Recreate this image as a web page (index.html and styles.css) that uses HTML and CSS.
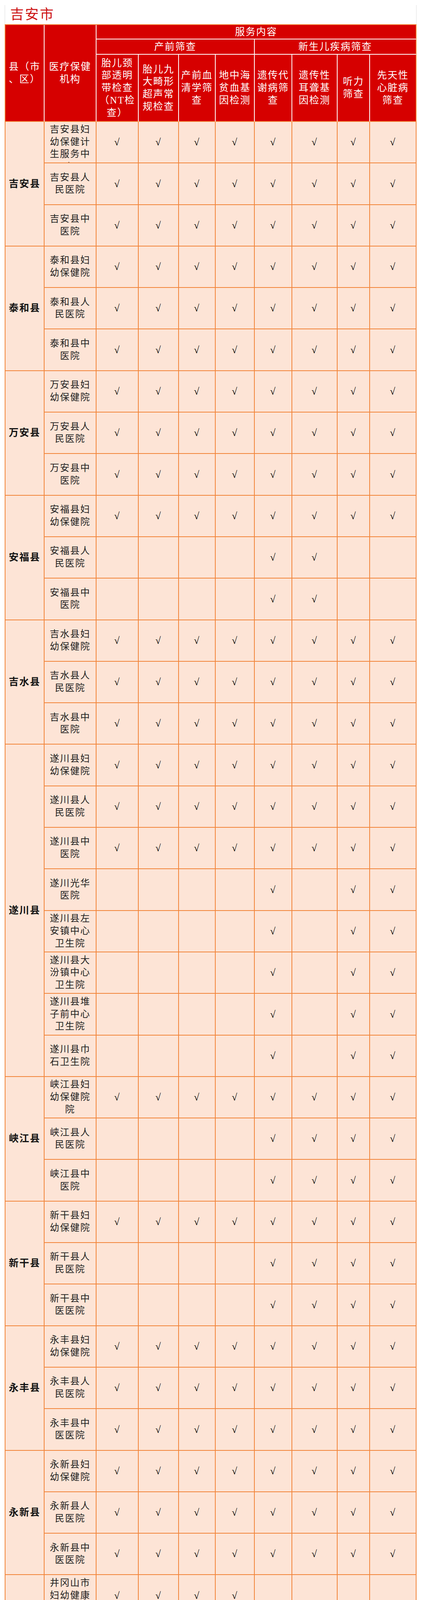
FILE: index.html
```html
<!DOCTYPE html>
<html lang="zh-CN">
<head>
<meta charset="utf-8">
<title>吉安市</title>
<link rel="stylesheet" href="styles.css">
</head>
<body>
<div class="title">吉安市</div>
<table class="tbl">
<colgroup>
<col class="w-county"><col class="w-org"><col class="w-c1"><col class="w-c2"><col class="w-c3"><col class="w-c4"><col class="w-c5"><col class="w-c6"><col class="w-c7"><col class="w-c8">
</colgroup>
<thead>
<tr class="h1"><th rowspan="3" class="eb">县（市<br>、区）</th><th rowspan="3" class="eb">医疗保健<br>机构</th><th colspan="8" class="er">服务内容</th></tr>
<tr class="h2"><th colspan="4">产前筛查</th><th colspan="4" class="er">新生儿疾病筛查</th></tr>
<tr class="h3"><th class="eb">胎儿颈<br>部透明<br>带检查<br>（NT检<br>查）</th><th class="eb">胎儿九<br>大畸形<br>超声常<br>规检查</th><th class="eb">产前血<br>清学筛<br>查</th><th class="eb">地中海<br>贫血基<br>因检测</th><th class="eb">遗传代<br>谢病筛<br>查</th><th class="eb">遗传性<br>耳聋基<br>因检测</th><th class="eb">听力<br>筛查</th><th class="eb er">先天性<br>心脏病<br>筛查</th></tr>
</thead>
<tbody>
<tr><td class="county" rowspan="3">吉安县</td><td class="org clip"><div class="clipbox">吉安县妇幼保健计生服务中心</div></td><td>√</td><td>√</td><td>√</td><td>√</td><td>√</td><td>√</td><td>√</td><td>√</td></tr>
<tr><td class="org">吉安县人民医院</td><td>√</td><td>√</td><td>√</td><td>√</td><td>√</td><td>√</td><td>√</td><td>√</td></tr>
<tr><td class="org">吉安县中医院</td><td>√</td><td>√</td><td>√</td><td>√</td><td>√</td><td>√</td><td>√</td><td>√</td></tr>

<tr><td class="county" rowspan="3">泰和县</td><td class="org">泰和县妇幼保健院</td><td>√</td><td>√</td><td>√</td><td>√</td><td>√</td><td>√</td><td>√</td><td>√</td></tr>
<tr><td class="org">泰和县人民医院</td><td>√</td><td>√</td><td>√</td><td>√</td><td>√</td><td>√</td><td>√</td><td>√</td></tr>
<tr><td class="org">泰和县中医院</td><td>√</td><td>√</td><td>√</td><td>√</td><td>√</td><td>√</td><td>√</td><td>√</td></tr>

<tr><td class="county" rowspan="3">万安县</td><td class="org">万安县妇幼保健院</td><td>√</td><td>√</td><td>√</td><td>√</td><td>√</td><td>√</td><td>√</td><td>√</td></tr>
<tr><td class="org">万安县人民医院</td><td>√</td><td>√</td><td>√</td><td>√</td><td>√</td><td>√</td><td>√</td><td>√</td></tr>
<tr><td class="org">万安县中医院</td><td>√</td><td>√</td><td>√</td><td>√</td><td>√</td><td>√</td><td>√</td><td>√</td></tr>

<tr><td class="county" rowspan="3">安福县</td><td class="org">安福县妇幼保健院</td><td>√</td><td>√</td><td>√</td><td>√</td><td>√</td><td>√</td><td>√</td><td>√</td></tr>
<tr><td class="org">安福县人民医院</td><td></td><td></td><td></td><td></td><td>√</td><td>√</td><td></td><td></td></tr>
<tr><td class="org">安福县中医院</td><td></td><td></td><td></td><td></td><td>√</td><td>√</td><td></td><td></td></tr>

<tr><td class="county" rowspan="3">吉水县</td><td class="org">吉水县妇幼保健院</td><td>√</td><td>√</td><td>√</td><td>√</td><td>√</td><td>√</td><td>√</td><td>√</td></tr>
<tr><td class="org">吉水县人民医院</td><td>√</td><td>√</td><td>√</td><td>√</td><td>√</td><td>√</td><td>√</td><td>√</td></tr>
<tr><td class="org">吉水县中医院</td><td>√</td><td>√</td><td>√</td><td>√</td><td>√</td><td>√</td><td>√</td><td>√</td></tr>

<tr><td class="county" rowspan="8">遂川县</td><td class="org">遂川县妇幼保健院</td><td>√</td><td>√</td><td>√</td><td>√</td><td>√</td><td>√</td><td>√</td><td>√</td></tr>
<tr><td class="org">遂川县人民医院</td><td>√</td><td>√</td><td>√</td><td>√</td><td>√</td><td>√</td><td>√</td><td>√</td></tr>
<tr><td class="org">遂川县中医院</td><td>√</td><td>√</td><td>√</td><td>√</td><td>√</td><td>√</td><td>√</td><td>√</td></tr>
<tr><td class="org">遂川光华医院</td><td></td><td></td><td></td><td></td><td>√</td><td></td><td>√</td><td>√</td></tr>
<tr><td class="org">遂川县左安镇中心卫生院</td><td></td><td></td><td></td><td></td><td>√</td><td></td><td>√</td><td>√</td></tr>
<tr><td class="org">遂川县大汾镇中心卫生院</td><td></td><td></td><td></td><td></td><td>√</td><td></td><td>√</td><td>√</td></tr>
<tr><td class="org">遂川县堆子前中心卫生院</td><td></td><td></td><td></td><td></td><td>√</td><td></td><td>√</td><td>√</td></tr>
<tr><td class="org">遂川县巾石卫生院</td><td></td><td></td><td></td><td></td><td>√</td><td></td><td>√</td><td>√</td></tr>

<tr><td class="county" rowspan="3">峡江县</td><td class="org">峡江县妇幼保健院院</td><td>√</td><td>√</td><td>√</td><td>√</td><td>√</td><td>√</td><td>√</td><td>√</td></tr>
<tr><td class="org">峡江县人民医院</td><td></td><td></td><td></td><td></td><td>√</td><td>√</td><td>√</td><td>√</td></tr>
<tr><td class="org">峡江县中医院</td><td></td><td></td><td></td><td></td><td>√</td><td>√</td><td>√</td><td>√</td></tr>

<tr><td class="county" rowspan="3">新干县</td><td class="org">新干县妇幼保健院</td><td>√</td><td>√</td><td>√</td><td>√</td><td>√</td><td>√</td><td>√</td><td>√</td></tr>
<tr><td class="org">新干县人民医院</td><td></td><td></td><td></td><td></td><td>√</td><td>√</td><td>√</td><td>√</td></tr>
<tr><td class="org">新干县中医医院</td><td></td><td></td><td></td><td></td><td>√</td><td>√</td><td>√</td><td>√</td></tr>

<tr><td class="county" rowspan="3">永丰县</td><td class="org">永丰县妇幼保健院</td><td>√</td><td>√</td><td>√</td><td>√</td><td>√</td><td>√</td><td>√</td><td>√</td></tr>
<tr><td class="org">永丰县人民医院</td><td>√</td><td>√</td><td>√</td><td>√</td><td>√</td><td>√</td><td>√</td><td>√</td></tr>
<tr><td class="org">永丰县中医医院</td><td>√</td><td>√</td><td>√</td><td>√</td><td>√</td><td>√</td><td>√</td><td>√</td></tr>

<tr><td class="county" rowspan="3">永新县</td><td class="org">永新县妇幼保健院</td><td>√</td><td>√</td><td>√</td><td>√</td><td>√</td><td>√</td><td>√</td><td>√</td></tr>
<tr><td class="org">永新县人民医院</td><td>√</td><td>√</td><td>√</td><td>√</td><td>√</td><td>√</td><td>√</td><td>√</td></tr>
<tr><td class="org">永新县中医医院</td><td>√</td><td>√</td><td>√</td><td>√</td><td>√</td><td>√</td><td>√</td><td>√</td></tr>

<tr><td class="county" rowspan="3">井冈山市</td><td class="org">井冈山市妇幼健康服务中心</td><td>√</td><td>√</td><td>√</td><td>√</td><td></td><td></td><td></td><td></td></tr>
<tr><td class="org">井冈山市第二人民医院</td><td></td><td></td><td></td><td></td><td>√</td><td>√</td><td>√</td><td>√</td></tr>
<tr><td class="org">井冈山市人民医院</td><td>√</td><td>√</td><td>√</td><td>√</td><td>√</td><td>√</td><td>√</td><td>√</td></tr>

<tr class="tall6"><td class="county" rowspan="4">青原区</td><td class="org">吉安市青原区人民医院（吉安市青原区总医院）</td><td>√</td><td>√</td><td>√</td><td>√</td><td>√</td><td>√</td><td>√</td><td>√</td></tr>
<tr><td class="org">吉安市中医院</td><td></td><td></td><td></td><td></td><td>√</td><td>√</td><td>√</td><td>√</td></tr>
<tr><td class="org">青原区值夏中心卫生院</td><td></td><td></td><td></td><td></td><td>√</td><td>√</td><td>√</td><td>√</td></tr>
<tr><td class="org">富田中心卫生院</td><td></td><td></td><td></td><td></td><td>√</td><td>√</td><td></td><td>√</td></tr>

<tr><td class="county" rowspan="5">吉州区</td><td class="org">吉州区卫生健康服务中心</td><td>√</td><td></td><td>√</td><td>√</td><td></td><td></td><td></td><td></td></tr>
<tr><td class="org">吉安市第一人民医院</td><td>√</td><td>√</td><td>√</td><td>√</td><td>√</td><td>√</td><td>√</td><td>√</td></tr>
<tr class="tall5"><td class="org">吉安市中心人民医院(上海东方医院吉安医院）</td><td>√</td><td>√</td><td>√</td><td>√</td><td>√</td><td>√</td><td>√</td><td>√</td></tr>
<tr><td class="org">井冈山大学附属医院</td><td>√</td><td>√</td><td>√</td><td>√</td><td>√</td><td>√</td><td>√</td><td>√</td></tr>
<tr><td class="org">吉安市妇幼保健院</td><td>√</td><td>√</td><td>√</td><td>√</td><td>√</td><td>√</td><td>√</td><td>√</td></tr>
</tbody>
</table>
</body>
</html>
```

FILE: styles.css
```css
* {
  box-sizing: border-box;
}

body {
  margin: 13px 14px 0 12px;
  background: #ffffff;
  font-family: "Liberation Serif", "Noto Sans CJK SC", serif;
  color: #111111;
}

.title {
  height: 49px;
  border-left: 1px solid #dedede;
  border-right: 1px solid #dedede;
  padding-left: 13px;
  color: #cc1010;
  font-size: 35px;
  line-height: 49px;
  letter-spacing: 3px;
}

.tbl {
  width: 1054px;
  table-layout: fixed;
  border-collapse: separate;
  border-spacing: 0;
  border-top: 2px solid #f2853a;
  border-left: 2px solid #f2853a;
}

.w-county { width: 100px; }
.w-org { width: 133px; }
.w-c1 { width: 108px; }
.w-c2 { width: 103px; }
.w-c3 { width: 94px; }
.w-c4 { width: 100px; }
.w-c5 { width: 96px; }
.w-c6 { width: 116px; }
.w-c7 { width: 83px; }
.w-c8 { width: 119px; }

th {
  background: #d60000;
  color: #ffffff;
  font-weight: normal;
  font-size: 25px;
  letter-spacing: 2px;
  line-height: 31.7px;
  padding: 0 2px;
  text-align: center;
  vertical-align: middle;
  border-right: 2px solid #ffffff;
  border-bottom: 2px solid #ffffff;
}

th.er {
  border-right-color: #f2853a;
}

th.eb {
  border-bottom-color: #f2853a;
}

.h1 { height: 37px; }
.h2 { height: 39px; }
.h3 { height: 172px; }

tbody tr {
  height: 106.3px;
}

tbody tr.tall6 {
  height: 201.6px;
}

tbody tr.tall5 {
  height: 212.4px;
}

td {
  background: #fde4d6;
  border-right: 2px solid #f2853a;
  border-bottom: 2px solid #f2853a;
  text-align: center;
  vertical-align: middle;
  font-size: 25px;
  letter-spacing: 2px;
  line-height: 31.7px;
  padding: 0;
  color: #000000;
}

td.county {
  font-weight: bold;
  font-size: 25px;
  padding: 0 6px;
  color: #141414;
}

td.org {
  font-size: 24px;
  padding: 0 8px;
  color: #222222;
}

td.clip {
  vertical-align: top;
}

.clipbox {
  height: 104px;
  overflow: hidden;
  padding-top: 4px;
}
```
